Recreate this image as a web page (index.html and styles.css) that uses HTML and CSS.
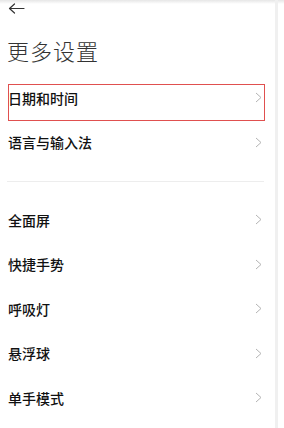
FILE: index.html
```html
<!DOCTYPE html>
<html lang="zh-CN">
<head>
<meta charset="utf-8">
<link rel="stylesheet" href="styles.css">
</head>
<body>
<div class="page">
  <div class="topbar">
    <svg class="back" width="17" height="11" viewBox="0 0 17 11"><path d="M1.5 5.5H16M6.5 1L1.5 5.5L6.5 10" fill="none" stroke="#333" stroke-width="1.2" stroke-linecap="round" stroke-linejoin="round"/></svg>
  </div>
  <h1 class="title">更多设置</h1>
  <ul class="list">
    <li class="row selected"><span>日期和时间</span><svg class="chev" width="7" height="11" viewBox="0 0 7 11"><path d="M1 1L6 5.5L1 10" fill="none" stroke="#b4b4b4" stroke-width="1"/></svg></li>
    <li class="row"><span>语言与输入法</span><svg class="chev" width="7" height="11" viewBox="0 0 7 11"><path d="M1 1L6 5.5L1 10" fill="none" stroke="#b4b4b4" stroke-width="1"/></svg></li>
  </ul>
  <div class="divider"></div>
  <ul class="list">
    <li class="row"><span>全面屏</span><svg class="chev" width="7" height="11" viewBox="0 0 7 11"><path d="M1 1L6 5.5L1 10" fill="none" stroke="#b4b4b4" stroke-width="1"/></svg></li>
    <li class="row"><span>快捷手势</span><svg class="chev" width="7" height="11" viewBox="0 0 7 11"><path d="M1 1L6 5.5L1 10" fill="none" stroke="#b4b4b4" stroke-width="1"/></svg></li>
    <li class="row"><span>呼吸灯</span><svg class="chev" width="7" height="11" viewBox="0 0 7 11"><path d="M1 1L6 5.5L1 10" fill="none" stroke="#b4b4b4" stroke-width="1"/></svg></li>
    <li class="row"><span>悬浮球</span><svg class="chev" width="7" height="11" viewBox="0 0 7 11"><path d="M1 1L6 5.5L1 10" fill="none" stroke="#b4b4b4" stroke-width="1"/></svg></li>
    <li class="row"><span>单手模式</span><svg class="chev" width="7" height="11" viewBox="0 0 7 11"><path d="M1 1L6 5.5L1 10" fill="none" stroke="#b4b4b4" stroke-width="1"/></svg></li>
  </ul>
</div>
</body>
</html>
```
FILE: styles.css
```css
html, body {
  margin: 0;
  padding: 0;
  background: #fff;
}
body {
  font-family: "Noto Sans CJK SC", "Noto Sans", sans-serif;
  color: #1a1a1a;
  background: linear-gradient(#e6e6e6, #ffffff 4px);
  height: 428px;
  overflow: hidden;
}
.page {
  width: 275px;
  height: 428px;
  border-right: 3px solid #f0f0f0;
  box-sizing: content-box;
}
.topbar {
  height: 16px;
  padding-left: 8px;
  display: flex;
  align-items: center;
}
.back {
  display: block;
}
.title {
  margin: 17px 0 0 7px;
  font-size: 22px;
  line-height: 34px;
  font-weight: 300;
  color: #333;
  letter-spacing: 1px;
}
.list {
  list-style: none;
  margin: 0;
  padding: 0;
}
.title + .list {
  margin-top: 8.5px;
}
.row {
  position: relative;
  height: 44.5px;
  display: flex;
  align-items: center;
  justify-content: space-between;
  padding: 0 13px 0 8px;
  font-size: 14px;
  font-weight: 500;
  color: #111;
}
.row span {
  letter-spacing: 0;
}
.chev {
  display: block;
}
.selected::after {
  content: "";
  position: absolute;
  left: 8px;
  right: 10px;
  top: 8.5px;
  bottom: -1px;
  border: 1px solid #e0504f;
}
.divider {
  height: 1px;
  margin: 16px 11px 16px 7px;
  background: #ededed;
}
```
